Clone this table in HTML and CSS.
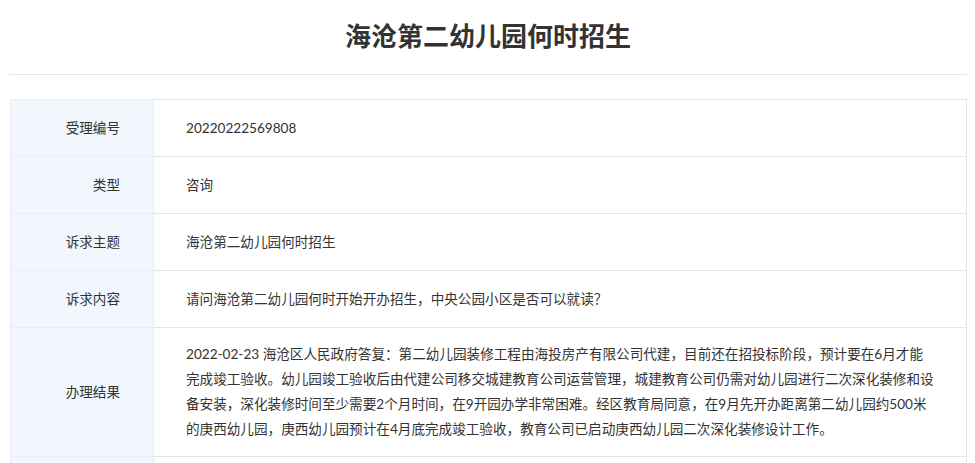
FILE: index.html
```html
<!DOCTYPE html>
<html lang="zh-CN">
<head>
  <meta charset="UTF-8" />
  <meta name="viewport" content="width=device-width, initial-scale=1.0"/>
  <title>海沧第二幼儿园何时招生</title>
  <link rel="stylesheet" href="styles.css">
</head>
<body>
<div class="page">
  <h1 class="title">海沧第二幼儿园何时招生</h1>

  <table class="detail">
    <tr>
      <th>受理编号</th>
      <td>20220222569808</td>
    </tr>
    <tr>
      <th>类型</th>
      <td>咨询</td>
    </tr>
    <tr>
      <th>诉求主题</th>
      <td>海沧第二幼儿园何时招生</td>
    </tr>
    <tr>
      <th>诉求内容</th>
      <td>请问海沧第二幼儿园何时开始开办招生，中央公园小区是否可以就读？</td>
    </tr>
    <tr>
      <th>办理结果</th>
      <td><div class="reply">2022-02-23 海沧区人民政府答复：第二幼儿园装修工程由海投房产有限公司代建，目前还在招投标阶段，预计要在6月才能完成竣工验收。幼儿园竣工验收后由代建公司移交城建教育公司运营管理，城建教育公司仍需对幼儿园进行二次深化装修和设备安装，深化装修时间至少需要2个月时间，在9开园办学非常困难。经区教育局同意，在9月先开办距离第二幼儿园约500米的庚西幼儿园，庚西幼儿园预计在4月底完成竣工验收，教育公司已启动庚西幼儿园二次深化装修设计工作。</div></td>
    </tr>
    <tr>
      <th>&nbsp;</th>
      <td>&nbsp;</td>
    </tr>
  </table>
</div>
</body>
</html>
```

FILE: styles.css
```css
:root {
  --text: #333333;
  --border: #e5e5e5;
  --label-bg: #f2f7fe;
}

body {
  margin: 0;
  background: #ffffff;
  color: var(--text);
  font-family: Lato, "Noto Sans CJK SC", sans-serif;
  font-size: 13.6px;
}

.page {
  padding: 0 8px 0 9px;
}

.title {
  margin: 0;
  height: 74px;
  line-height: 70px;
  text-align: center;
  font-size: 26px;
  font-weight: bold;
  font-family: "Noto Sans CJK SC", sans-serif;
  color: #333;
  border-bottom: 1px solid var(--border);
}

.detail {
  width: calc(100% - 1px);
  margin: 24px 0 0 1px;
  border-collapse: collapse;
  table-layout: fixed;
}

.detail th,
.detail td {
  border: 1px solid var(--border);
  padding: 14px 32px;
  line-height: 28px;
  font-weight: normal;
  vertical-align: middle;
}

.detail th {
  width: 143px;
  box-sizing: border-box;
  padding-right: 33px;
  text-align: right;
  background: var(--label-bg);
  border-color: #e8edf3;
}

.detail td {
  text-align: left;
}

.reply {
  line-height: 25px;
}
```
